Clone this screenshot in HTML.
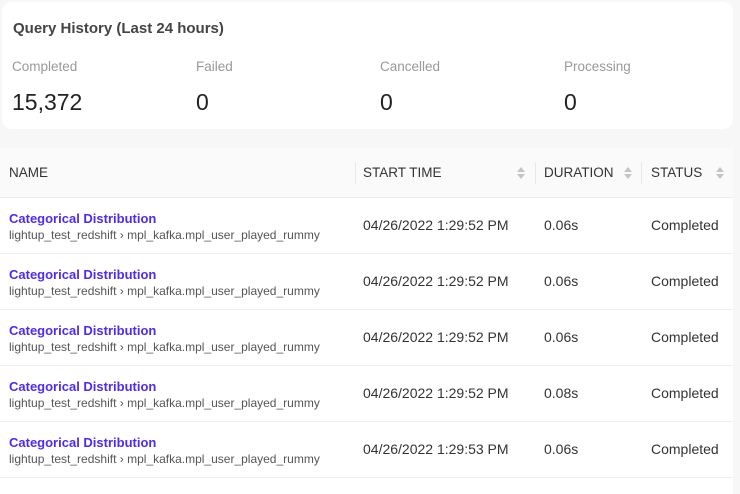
<!DOCTYPE html>
<html style="height:494px;overflow:hidden"><head><style>
body{margin:0;width:740px;height:494px;background:#f7f7f7;font-family:"Liberation Sans",sans-serif;overflow:hidden;position:relative}
.card{position:absolute;left:2px;top:2px;width:731px;height:127px;background:#fff;border-radius:10px}
.title{position:absolute;left:11px;top:18px;font-size:15px;font-weight:bold;color:#444}
.lbl{position:absolute;top:57px;font-size:13.5px;color:#999}
.val{position:absolute;top:87px;font-size:23px;color:#222}
.tbl{position:absolute;left:0;top:148px;width:733px;height:346px;overflow:hidden}
.hd{height:49px;background:#fafafa;border-bottom:1px solid #eee;position:relative;font-size:13.5px;color:#333}
.hd span{position:absolute;top:17px}
.div{position:absolute;top:14px;width:1px;height:22px;background:#e8e8e8}
.sort{position:absolute;top:19px;width:8px}
.sort:before,.sort:after{content:"";position:absolute;left:0;border-left:4px solid transparent;border-right:4px solid transparent}
.sort:before{top:0;border-bottom:5px solid #c4c4c4}
.sort:after{top:7px;border-top:5px solid #c4c4c4}
.row{height:55px;background:#fff;border-bottom:1px solid #eee;position:relative;font-size:14px;color:#333}
.row .n{position:absolute;left:9px;top:13px;font-size:13px;font-weight:bold;color:#4a2cf5}
.row .s{position:absolute;left:9px;top:30px;font-size:12px;color:#555}
.row .c{position:absolute;top:19px}
</style></head><body>
<div class="card">
<div class="title">Query History (Last 24 hours)</div>
<div class="lbl" style="left:10px">Completed</div>
<div class="lbl" style="left:194px">Failed</div>
<div class="lbl" style="left:378px">Cancelled</div>
<div class="lbl" style="left:562px">Processing</div>
<div class="val" style="left:10px">15,372</div>
<div class="val" style="left:194px">0</div>
<div class="val" style="left:378px">0</div>
<div class="val" style="left:562px">0</div>
</div>
<div class="tbl">
<div class="hd">
<span style="left:9px">NAME</span>
<div class="div" style="left:355px"></div><span style="left:363px">START TIME</span><div class="sort" style="left:517px"></div>
<div class="div" style="left:535px"></div><span style="left:544px">DURATION</span><div class="sort" style="left:624px"></div>
<div class="div" style="left:641px"></div><span style="left:651px">STATUS</span><div class="sort" style="left:716px"></div>
</div>
<div class="row"><div class="n">Categorical Distribution</div><div class="s">lightup_test_redshift › mpl_kafka.mpl_user_played_rummy</div><div class="c" style="left:363px">04/26/2022 1:29:52 PM</div><div class="c" style="left:544px">0.06s</div><div class="c" style="left:651px">Completed</div></div>
<div class="row"><div class="n">Categorical Distribution</div><div class="s">lightup_test_redshift › mpl_kafka.mpl_user_played_rummy</div><div class="c" style="left:363px">04/26/2022 1:29:52 PM</div><div class="c" style="left:544px">0.06s</div><div class="c" style="left:651px">Completed</div></div>
<div class="row"><div class="n">Categorical Distribution</div><div class="s">lightup_test_redshift › mpl_kafka.mpl_user_played_rummy</div><div class="c" style="left:363px">04/26/2022 1:29:52 PM</div><div class="c" style="left:544px">0.06s</div><div class="c" style="left:651px">Completed</div></div>
<div class="row"><div class="n">Categorical Distribution</div><div class="s">lightup_test_redshift › mpl_kafka.mpl_user_played_rummy</div><div class="c" style="left:363px">04/26/2022 1:29:52 PM</div><div class="c" style="left:544px">0.08s</div><div class="c" style="left:651px">Completed</div></div>
<div class="row"><div class="n">Categorical Distribution</div><div class="s">lightup_test_redshift › mpl_kafka.mpl_user_played_rummy</div><div class="c" style="left:363px">04/26/2022 1:29:53 PM</div><div class="c" style="left:544px">0.06s</div><div class="c" style="left:651px">Completed</div></div>
<div class="row"></div>
</div>
</body></html>
